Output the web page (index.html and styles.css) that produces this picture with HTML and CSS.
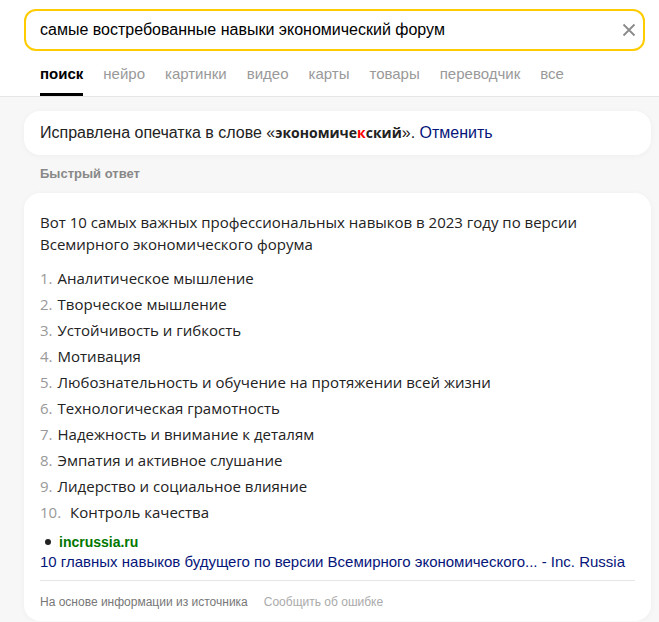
FILE: index.html
```html
<!DOCTYPE html>
<html lang="ru">
<head>
    <meta charset="UTF-8">
    <meta name="viewport" content="width=device-width, initial-scale=1.0">
    <title>самые востребованные навыки экономический форум</title>
    <link rel="stylesheet" href="styles.css">
</head>
<body>

<div class="header">
    <div class="search-box">
        <span class="search-text">самые востребованные навыки экономический форум</span>
        <svg class="clear-icon" width="14" height="14" viewBox="0 0 14 14">
            <path d="M1.5 1.5 L12.5 12.5 M12.5 1.5 L1.5 12.5" stroke="#8a8a8a" stroke-width="1.8" fill="none"/>
        </svg>
    </div>
    <div class="tabs">
        <span class="tab active">поиск</span>
        <span class="tab">нейро</span>
        <span class="tab">картинки</span>
        <span class="tab">видео</span>
        <span class="tab">карты</span>
        <span class="tab">товары</span>
        <span class="tab">переводчик</span>
        <span class="tab">все</span>
    </div>
</div>

<div class="content">
    <div class="card misspell">
        Исправлена опечатка в слове «<b>экономиче<span class="typo">к</span>ский</b>». <a class="link">Отменить</a>
    </div>

    <div class="label">Быстрый ответ</div>

    <div class="card answer">
        <p class="intro">Вот 10 самых важных профессиональных навыков в 2023 году по версии Всемирного экономического форума</p>
        <ol class="skills">
            <li><span class="num">1.</span>Аналитическое мышление</li>
            <li><span class="num">2.</span>Творческое мышление</li>
            <li><span class="num">3.</span>Устойчивость и гибкость</li>
            <li><span class="num">4.</span>Мотивация</li>
            <li><span class="num">5.</span>Любознательность и обучение на протяжении всей жизни</li>
            <li><span class="num">6.</span>Технологическая грамотность</li>
            <li><span class="num">7.</span>Надежность и внимание к деталям</li>
            <li><span class="num">8.</span>Эмпатия и активное слушание</li>
            <li><span class="num">9.</span>Лидерство и социальное влияние</li>
            <li><span class="num">10.</span>&nbsp;Контроль качества</li>
        </ol>
        <div class="source">
            <span class="dot"></span>
            <span class="domain">incrussia.ru</span>
        </div>
        <a class="link source-title">10 главных навыков будущего по версии Всемирного экономического... - Inc. Russia</a>
        <div class="footer">
            <span>На основе информации из источника</span>
            <span class="report">Сообщить об ошибке</span>
        </div>
    </div>
</div>

</body>
</html>
```

FILE: styles.css
```css
body {
    margin: 0;
    background-color: #f7f7f7;
    color: #222;
    font-family: 'Liberation Sans', Arial, sans-serif;
}

.header {
    background-color: #fff;
    padding: 9px 14px 0 24px;
    border-bottom: 1px solid #e6e6e6;
}

.search-box {
    height: 38px;
    border: 2px solid #fc0;
    border-radius: 12px;
    display: flex;
    align-items: center;
    justify-content: space-between;
    padding: 0 7px 0 14px;
}

.search-text {
    font-size: 16px;
    color: #000;
}

.tabs {
    display: flex;
    gap: 20px;
    padding-left: 16px;
}

.tab {
    font-size: 15px;
    line-height: 16px;
    color: #999;
    padding: 15px 0 11px;
    border-bottom: 3px solid transparent;
}

.tab.active {
    color: #000;
    font-weight: bold;
    border-bottom-color: #000;
}

.content {
    padding: 14px 8px 0 24px;
}

.card {
    background-color: #fff;
    border-radius: 16px;
    box-shadow: 0 1px 6px rgba(0, 0, 0, 0.04);
}

.misspell {
    height: 44px;
    line-height: 44px;
    padding: 0 16px;
    font-size: 16px;
    color: #222;
}

.misspell b {
    font-family: 'Open Sans', sans-serif;
    font-size: 14px;
}

.typo {
    color: #f00;
}

.link {
    color: #06157a;
    text-decoration: none;
}

.label {
    padding: 11px 16px;
    line-height: 16px;
    font-size: 13px;
    font-weight: bold;
    color: #888;
}

.answer {
    padding: 18px 16px 11px;
    font-family: 'Open Sans', sans-serif;
}

.intro {
    margin: 0;
    font-size: 15px;
    line-height: 22px;
    color: #222;
}

.skills {
    list-style: none;
    margin: 10px 0 0;
    padding: 0;
}

.skills li {
    font-size: 15px;
    line-height: 26px;
    color: #222;
}

.num {
    color: #999;
    margin-right: 5px;
}

.source {
    margin-top: 8px;
    display: flex;
    align-items: center;
    height: 18px;
    gap: 8px;
    padding-left: 5px;
}

.dot {
    width: 6px;
    height: 6px;
    border-radius: 50%;
    background-color: #222;
}

.domain {
    font-family: 'Liberation Sans', Arial, sans-serif;
    font-size: 14px;
    font-weight: bold;
    color: #070;
}

.source-title {
    display: block;
    margin-top: 1px;
    padding-bottom: 8px;
    line-height: 20px;
    font-family: 'Liberation Sans', Arial, sans-serif;
    font-size: 15px;
    border-bottom: 1px solid #e6e6e6;
}

.footer {
    margin-top: 13px;
    line-height: 16px;
    font-family: 'Liberation Sans', Arial, sans-serif;
    font-size: 12px;
    color: #777;
    display: flex;
    gap: 16px;
}

.report {
    color: #aaa;
}
```
